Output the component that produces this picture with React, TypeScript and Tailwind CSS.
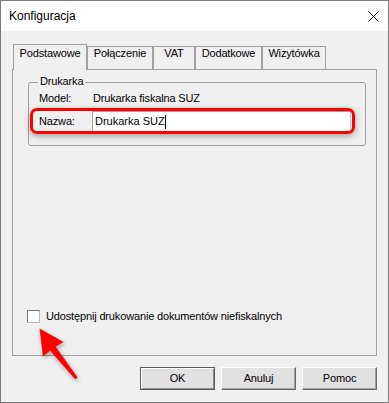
import React from "react";

const tabs = [
  { label: "Połączenie", w: "w-[66px]" },
  { label: "VAT", w: "w-[42px]" },
  { label: "Dodatkowe", w: "w-[67px]" },
  { label: "Wizytówka", w: "w-[64px]" },
];

function Button({ children, isDefault }: { children: React.ReactNode; isDefault?: boolean }) {
  return (
    <div
      className={
        "w-[75px] h-[23px] flex items-center justify-center leading-[13px] bg-[#e1e1e1] " +
        (isDefault
          ? "border border-[#5a5a5a] shadow-[inset_1px_1px_0_#ffffff,inset_-1px_-1px_0_#8a8a8a]"
          : "border border-t-white border-l-white border-r-[#696969] border-b-[#696969] shadow-[inset_-1px_-1px_0_#a0a0a0]")
      }
    >
      {children}
    </div>
  );
}

export default function App() {
  return (
    <div className="relative w-[389px] h-[403px] flex flex-col border border-[#7a7a7a] bg-[#f0f0f0] text-black text-[11px] [font-family:'Liberation_Sans',Arial,sans-serif]">
      {/* Title bar */}
      <div className="h-[30px] shrink-0 bg-white flex items-center justify-between pl-[8px] pr-[9px]">
        <span className="text-[12px]">Konfiguracja</span>
        <svg width="11" height="11" viewBox="0 0 11 11">
          <path d="M0.5 0.5 L10.5 10.5 M10.5 0.5 L0.5 10.5" stroke="#000" strokeWidth="1" />
        </svg>
      </div>

      {/* Body */}
      <div className="flex-1 flex flex-col px-[11px] pt-[13px] tracking-[-0.15px]">
        {/* Tabs */}
        <div className="relative z-10 flex items-end h-[25px] pl-[1px]">
          <div className="w-[74px] h-[26px] -mb-[1px] border border-b-0 border-[#a0a0a0] bg-[#f0f0f0] pt-[2px] text-center leading-[13px]">
            Podstawowe
          </div>
          {tabs.map((t) => (
            <div
              key={t.label}
              className={t.w + " h-[23px] border border-b-0 border-[#a0a0a0] bg-[#f0f0f0] text-center leading-[13px]"}
            >
              {t.label}
            </div>
          ))}
        </div>

        {/* Panel */}
        <div className="h-[287px] border border-[#a0a0a0] flex flex-col pl-[15px] pt-[12px] pb-[32px]">
          {/* Group box */}
          <div className="relative w-[338px] h-[64px] border border-[#a0a0a0] rounded-[3px] pl-[10px] pt-[9px]">
            <span className="absolute left-[9px] -top-[8px] px-[2px] bg-[#f0f0f0] leading-[13px]">Drukarka</span>
            <div className="flex h-[13px] leading-[13px]">
              <span className="w-[54px]">Model:</span>
              <span>Drukarka fiskalna SUZ</span>
            </div>
            <div className="flex items-center mt-[6px]">
              <span className="w-[53px] leading-[13px]">Nazwa:</span>
              <div className="w-[259px] h-[21px] bg-white border border-[#a0a0a0] border-b-[#dcdcdc] border-r-[#c8c8c8] flex items-center pl-[2px] leading-[13px] tracking-normal">
                <span>Drukarka SUZ</span>
                <span className="inline-block w-px h-[14px] bg-black" />
              </div>
            </div>
            {/* Red highlight */}
            <div className="absolute left-[1px] top-[25px] w-[325px] h-[26px] border-[3px] border-[#ff0000] rounded-[7px] shadow-[0_2px_6px_rgba(0,0,0,0.35)] pointer-events-none" />
          </div>

          {/* Checkbox */}
          <div className="mt-auto -ml-[1px] flex items-center gap-[6px] h-[13px]">
            <div className="w-[13px] h-[13px] bg-white border border-[#7a7a7a] border-b-[#b5b5b5] border-r-[#b5b5b5]" />
            <span className="leading-[13px]">Udostępnij drukowanie dokumentów niefiskalnych</span>
          </div>
        </div>

        {/* Buttons */}
        <div className="mt-[11px] flex justify-end gap-[6px]">
          <Button isDefault>OK</Button>
          <Button>Anuluj</Button>
          <Button>Pomoc</Button>
        </div>
      </div>

      {/* Red arrow */}
      <svg
        className="absolute -left-px -top-px pointer-events-none"
        width="389"
        height="403"
        viewBox="0 0 389 403"
        style={{ filter: "drop-shadow(1px 2px 2px rgba(0,0,0,0.35))" }}
      >
        <polygon
          points="39.5,328.5 63.5,342 55.5,346.5 77.6,377.4 75.2,379.2 50,350.5 43,356.5"
          fill="#ff0000"
        />
      </svg>
    </div>
  );
}
